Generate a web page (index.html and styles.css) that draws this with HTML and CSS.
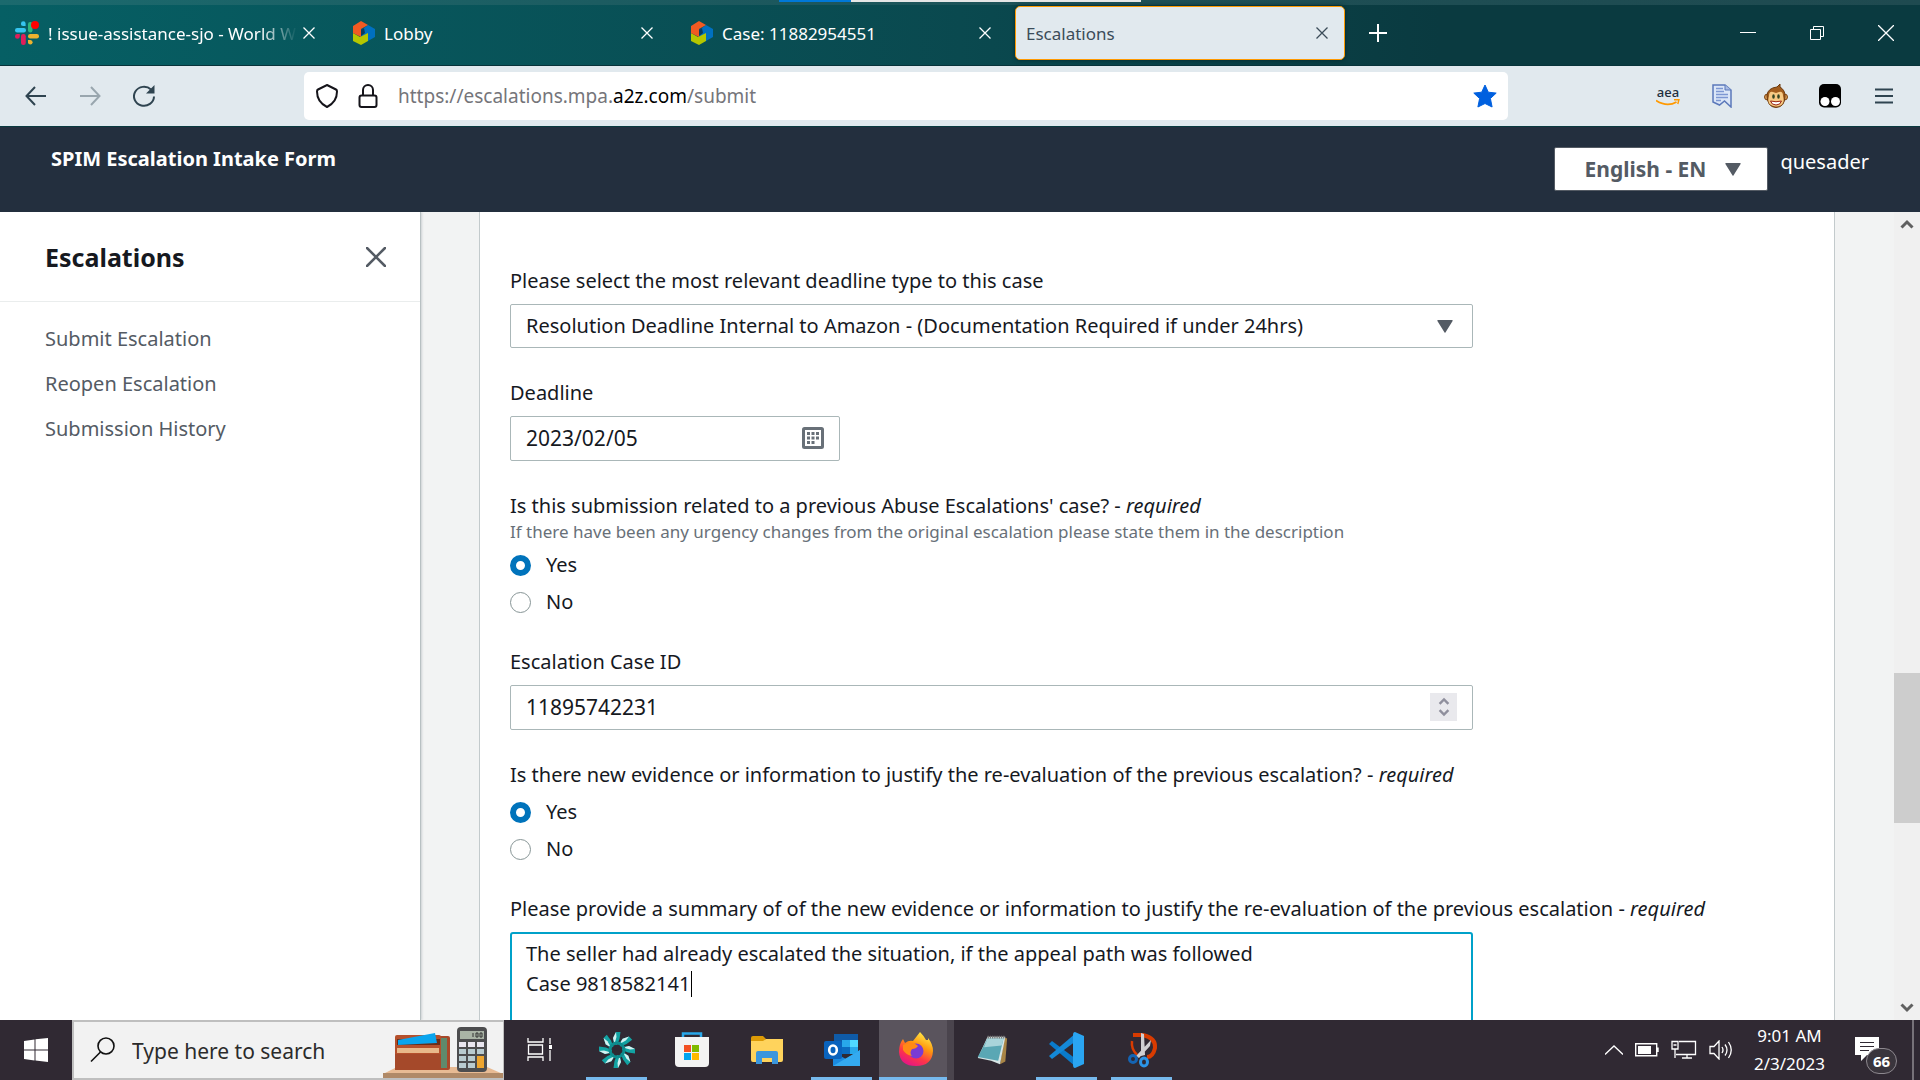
FILE: index.html
```
<!DOCTYPE html>
<html lang="en">
<head>
    <meta charset="UTF-8">
    <meta name="viewport" content="width=device-width, initial-scale=1.0">
    <title>Escalations</title>
    <link rel="stylesheet" href="styles.css">
</head>
<body>
    <!-- shared icons -->
    <svg class="defs" width="0" height="0">
        <symbol id="i-x" viewBox="0 0 12 12"><path d="M.5.5l11 11M11.5.5l-11 11" fill="none" stroke="currentColor" stroke-width="1.3"/></symbol>
        <symbol id="i-hex" viewBox="0 0 22 24">
            <path d="M8 9l7-5 7 4v8l-7 4-7-4z" fill="#0070c0"/>
            <path d="M0 12l7 4 8-4v8l-7 4-8-4z" fill="#b5c700"/>
            <path d="M0 5L8 0l7 4-7 4v8L0 12z" fill="#f15a22"/>
            <path d="M8 9l3-2 1 5-4 3z" fill="#0b3c5e"/>
        </symbol>
        <symbol id="i-up" viewBox="0 0 14 10"><path d="M1.500 8.500L7 3l5.500 5.500" fill="none" stroke="currentColor" stroke-width="3"/></symbol>
        <symbol id="i-down" viewBox="0 0 14 10"><path d="M1.500 1.500L7 7l5.500-5.500" fill="none" stroke="currentColor" stroke-width="3"/></symbol>
        <symbol id="i-tri" viewBox="0 0 16 13"><path d="M1 0h14q1 0 .6 1L8.600 12.200q-.6 1-1.200 0L.4 1Q0 0 1 0z" fill="currentColor"/></symbol>
    </svg>

    <div class="frame">
        <div class="strip"><span class="strip-blue"></span><span class="strip-white"></span></div>
    </div>

    <header class="tabs">
        <div class="tab">
            <svg width="24" height="24" viewBox="0 0 24 24">
                <g fill="#36c5f0"><rect y="7" width="11" height="4.500" rx="2.200"/><path d="M6 2.500a2.300 2.300 0 0 1 4.600 0V5H8.300A2.300 2.300 0 0 1 6 2.500z"/></g>
                <rect x="13" y="1" width="4.500" height="10.500" rx="2.200" fill="#2eb67d"/>
                <g fill="#ecb22e"><rect x="13" y="13" width="11" height="4.500" rx="2.200"/><path d="M13 19h2.500a2.300 2.300 0 1 1-2.500 2.500z"/></g>
                <g fill="#e01e5a"><rect x="6" y="13" width="4.800" height="11" rx="2.200"/><path d="M4.800 13v2.300A2.400 2.400 0 1 1 2.500 13z"/></g>
                <circle cx="20" cy="4" r="4" fill="red"/>
            </svg>
            <span class="tab-title tab-fade">! issue-assistance-sjo - World W</span>
            <button class="tab-close" type="button" aria-label="Close tab"><svg width="12" height="12"><use href="#i-x"/></svg></button>
        </div>
        <div class="tab">
            <svg width="22" height="24"><use href="#i-hex"/></svg>
            <span class="tab-title">Lobby</span>
            <button class="tab-close" type="button" aria-label="Close tab"><svg width="12" height="12"><use href="#i-x"/></svg></button>
        </div>
        <div class="tab">
            <svg width="22" height="24"><use href="#i-hex"/></svg>
            <span class="tab-title">Case: 11882954551</span>
            <button class="tab-close" type="button" aria-label="Close tab"><svg width="12" height="12"><use href="#i-x"/></svg></button>
        </div>
        <div class="tab active">
            <span class="tab-title">Escalations</span>
            <button class="tab-close" type="button" aria-label="Close tab"><svg width="12" height="12"><use href="#i-x"/></svg></button>
        </div>
        <button class="new-tab" type="button" aria-label="New tab"><svg width="18" height="18" viewBox="0 0 18 18"><path d="M9 0v18M0 9h18" stroke="#fff" stroke-width="2"/></svg></button>
        <div class="window-buttons">
            <button type="button" aria-label="Minimize"><svg width="16" height="16" viewBox="0 0 16 16"><path d="M0 7.500h16" stroke="#fff"/></svg></button>
            <button type="button" aria-label="Restore"><svg width="16" height="16" viewBox="0 0 16 16"><path d="M1.500 4.500h10v10h-10zM4.500 4.500v-3h10v10h-3" fill="none" stroke="#fff"/></svg></button>
            <button type="button" aria-label="Close"><svg width="16" height="16" viewBox="0 0 16 16"><path d="M0 0l16 16M16 0L0 16" stroke="#fff" stroke-width="1.300"/></svg></button>
        </div>
    </header>

    <nav class="toolbar">
        <div class="nav-buttons">
            <button type="button" aria-label="Back"><svg width="22" height="20" viewBox="0 0 22 20"><path d="M21 10H1.500M10 1L1.500 10l8.500 9" fill="none" stroke="currentColor" stroke-width="2"/></svg></button>
            <button class="dim" type="button" aria-label="Forward"><svg width="22" height="20" viewBox="0 0 22 20"><path d="M1 10h19.500M12 1l8.500 9-8.500 9" fill="none" stroke="currentColor" stroke-width="2"/></svg></button>
            <button type="button" aria-label="Reload"><svg width="22" height="22" viewBox="0 0 22 22"><path d="M21 11.500A10 9.500 0 1 1 18 4.500" fill="none" stroke="currentColor" stroke-width="2"/><path d="M21.500 0v8.500H13z" fill="currentColor"/></svg></button>
        </div>
        <div class="urlbar">
            <svg width="22" height="24" viewBox="0 0 22 24"><path d="M11 1l9 4.500c1 .5 1 1 1 2 0 7-4 12.500-10 15.500C5 20 1 14.500 1 7.500c0-1 0-1.500 1-2z" fill="none" stroke="#15141a" stroke-width="2"/></svg>
            <svg width="20" height="24" viewBox="0 0 20 24"><rect x="1.500" y="11.500" width="17" height="11.500" rx="2" fill="none" stroke="#15141a" stroke-width="2"/><path d="M5 11V6a5 5 0 0 1 10 0v5" fill="none" stroke="#15141a" stroke-width="2"/></svg>
            <div class="url">https://escalations.mpa.<b>a2z.com</b>/submit</div>
            <svg width="24" height="26" viewBox="0 0 24 24"><path d="M12 1l3.300 7.200 7.900.9-5.800 5.400 1.700 8.500L12 19.500 4.900 23l1.700-8.500L.8 9.100l7.900-.9z" fill="#0060df" stroke="#0060df" stroke-linejoin="round"/></svg>
        </div>
        <div class="extensions">
            <div class="aea">aea<svg width="24" height="7" viewBox="0 0 24 7"><path d="M0 1.500q11 7 20.500 1.500" fill="none" stroke="#f90" stroke-width="1.800"/><path d="M18 .8l5-.3-1.200 4.500" fill="none" stroke="#f90" stroke-width="1.400"/></svg></div>
            <svg width="24" height="24" viewBox="-2 0 24 24"><path d="M1 1h12l6 5v17l-6.500-6-5 4L1 18z" fill="#dbe6f7" stroke="#5b78ba" stroke-width="1.500"/><path d="M13 1v5h6" fill="#a9bce4" stroke="#5b78ba"/><path d="M4 4.500h7M4 7.500h8M4 10.500h12M4 13.500h12M4 16.500h5" stroke="#7d97d2" stroke-width="1.500"/></svg>
            <svg width="24" height="24" viewBox="0 0 24 24"><circle cx="3.500" cy="13" r="3" fill="#d99b55" stroke="#7a4312"/><circle cx="20.500" cy="13" r="3" fill="#d99b55" stroke="#7a4312"/><path d="M3 11Q4 4 13 3l3-3 0 3q5 3 5 9 0 11-9 11.500Q3 23 3 11z" fill="#a25d1d" stroke="#6c3a0e"/><path d="M5 12q0-5 4-4l3 1 3-1q4-1 4 4 3 10-7 10.500Q2 22 5 12z" fill="#f6ca84"/><ellipse cx="9.500" cy="12.500" rx="1.300" ry="2.300" fill="#342"/><ellipse cx="14.500" cy="12.500" rx="1.300" ry="2.300" fill="#342"/><path d="M6.500 17q5.500 1.500 11 0-1 4-5.500 4t-5.500-4z" fill="#fff" stroke="#9a2412"/></svg>
            <svg width="24" height="24" viewBox="0 0 24 24"><rect x="1" y="0" width="22" height="23.500" rx="5"/><circle cx="7" cy="17.500" r="4.500" fill="#fff"/><circle cx="17.500" cy="17.500" r="4.500" fill="#fff"/></svg>
            <button type="button" aria-label="Menu"><svg width="18" height="16" viewBox="0 0 18 16"><path d="M0 1.500h18M0 8h18M0 14.500h18" stroke="#2f4450" stroke-width="2"/></svg></button>
        </div>
    </nav>

    <div class="app-header">
        <h1>SPIM Escalation Intake Form</h1>
        <button class="language" type="button">English - EN <svg width="16" height="13"><use href="#i-tri"/></svg></button>
        <span class="user">quesader</span>
    </div>

    <div class="content">
        <aside class="sidebar">
            <div class="sidebar-head">
                <h2>Escalations</h2>
                <button type="button" aria-label="Close navigation"><svg width="20" height="20" viewBox="0 0 20 20"><path d="M1 1l18 18M19 1L1 19" stroke="#545b64" stroke-width="2.500" stroke-linecap="round"/></svg></button>
            </div>
            <ul class="links">
                <li><a href="#">Submit Escalation</a></li>
                <li><a href="#">Reopen Escalation</a></li>
                <li><a href="#">Submission History</a></li>
            </ul>
        </aside>

        <main class="page">
            <form class="panel">
                <div class="field">
                    <label for="type">Please select the most relevant deadline type to this case</label>
                    <div class="control">
                        <select id="type">
                            <option>Resolution Deadline Internal to Amazon - (Documentation Required if under 24hrs)</option>
                        </select>
                        <svg class="select-arrow" width="16" height="13"><use href="#i-tri"/></svg>
                    </div>
                </div>

                <div class="field">
                    <label for="deadline">Deadline</label>
                    <div class="control short">
                        <input id="deadline" type="text" value="2023/02/05">
                        <svg class="calendar" width="22" height="22" viewBox="0 0 22 22"><rect x="1.500" y="1.500" width="19" height="19" rx="1" fill="#fff" stroke="#687078" stroke-width="3"/><path d="M5 6.500h12M5 11h12M5 15.500h8" stroke="#687078" stroke-width="3" stroke-dasharray="3 1.500"/></svg>
                    </div>
                </div>

                <fieldset class="field">
                    <legend>Is this submission related to a previous Abuse Escalations' case? - <i>required</i></legend>
                    <p class="hint">If there have been any urgency changes from the original escalation please state them in the description</p>
                    <div class="options">
                        <label><input type="radio" name="related" checked> Yes</label>
                        <label><input type="radio" name="related"> No</label>
                    </div>
                </fieldset>

                <div class="field">
                    <label for="caseid">Escalation Case ID</label>
                    <div class="control">
                        <input id="caseid" type="number" value="11895742231">
                        <span class="spinner">
                            <svg width="12" height="8"><use href="#i-up"/></svg>
                            <svg width="12" height="8"><use href="#i-down"/></svg>
                        </span>
                    </div>
                </div>

                <fieldset class="field">
                    <legend>Is there new evidence or information to justify the re-evaluation of the previous escalation? - <i>required</i></legend>
                    <div class="options">
                        <label><input type="radio" name="evidence" checked> Yes</label>
                        <label><input type="radio" name="evidence"> No</label>
                    </div>
                </fieldset>

                <div class="field">
                    <label for="summary">Please provide a summary of of the new evidence or information to justify the re-evaluation of the previous escalation - <i>required</i></label>
                    <div class="control">
                        <textarea id="summary" rows="5">The seller had already escalated the situation, if the appeal path was followed
Case 9818582141</textarea>
                        <span class="caret"></span>
                    </div>
                </div>
            </form>
        </main>

        <div class="scrollbar">
            <svg width="14" height="10"><use href="#i-up"/></svg>
            <div class="track"><div class="thumb"></div></div>
            <svg width="14" height="10"><use href="#i-down"/></svg>
        </div>
    </div>

    <footer class="taskbar">
        <button class="start" type="button" aria-label="Start"><svg width="24" height="24" viewBox="0 0 24 24"><path d="M0 3l10.500-1.500v10H0zM11.500 1.300L24 0v11.500H11.500zM0 12.500h10.500v10L0 21zM11.500 12.500H24V24l-12.500-1.500z" fill="#fff"/></svg></button>
        <div class="search">
            <svg width="26" height="26" viewBox="0 0 26 26"><circle cx="16" cy="9" r="8" fill="none" stroke="#111" stroke-width="1.600"/><path d="M10.500 15L1 24.500" stroke="#111" stroke-width="1.600"/></svg>
            <input type="text" placeholder="Type here to search" aria-label="Search">
            <svg width="120" height="56" viewBox="0 0 120 56">
                <path d="M0 52l14-7h90l16 7z" fill="#e8bb94"/><path d="M0 51h120v5H0z" fill="#b08a68"/>
                <rect x="40" y="14" width="27" height="34" rx="2" fill="#a8492a"/><rect x="58" y="16" width="6" height="30" fill="#5f8a6c"/>
                <rect x="12" y="13" width="46" height="35" rx="2" fill="#b5502c"/><path d="M14 17h43v6H14z" fill="#6b2d18"/><path d="M15 18l37-7 2 10-39 2z" fill="#0aa5ee"/><path d="M14 26h42v5H14z" fill="#e8b98a"/><path d="M12 32h46v16H12z" fill="#a5492a"/>
                <rect x="74" y="5" width="30" height="45" rx="4" fill="#4d4d4f"/><rect x="77" y="9" width="24" height="8" fill="#a9b3a5"/>
                <path d="M90 11v4M93 11h2v4h-2zM97 11h2v4h-2z" fill="none" stroke="#333"/>
                <path d="M76 22.500h25" stroke="#e9e6ef" stroke-width="5" stroke-dasharray="7 2"/><path d="M76 29.500h25M76 36.500h16M76 43.500h16" stroke="#b9cbd0" stroke-width="5" stroke-dasharray="7 2"/><rect x="94" y="34" width="7" height="12" fill="#eea52f"/>
            </svg>
        </div>
        <div class="apps">
            <button type="button" aria-label="Task view"><svg width="26" height="26" viewBox="0 0 26 26"><path d="M2 1v4h15V1M2 24v-4h15v4M2.500 8h14v9h-14zM24 1v6M24 13v11" fill="none" stroke="#fff" stroke-width="1.300"/><path d="M23 8h3v4h-3z" fill="#fff"/></svg></button>
            <button class="open" type="button" aria-label="Chime"><svg width="36" height="36" viewBox="-18 -18 36 36">
                <g id="petal"><path d="M-3-6l-1-6 3-6h4.500l-1 7-2.500 6z" fill="#12a3a3"/><path d="M-4-12l3-6 .5 5-2 7z" fill="#d4f1f1"/></g>
                <use href="#petal" transform="rotate(45)"/><use href="#petal" transform="rotate(90)"/><use href="#petal" transform="rotate(135)"/><use href="#petal" transform="rotate(180)"/><use href="#petal" transform="rotate(225)"/><use href="#petal" transform="rotate(270)"/><use href="#petal" transform="rotate(315)"/>
                <circle r="7" fill="none" stroke="#0d8c8e" stroke-width="3"/>
            </svg></button>
            <button type="button" aria-label="Store"><svg width="36" height="36" viewBox="0 0 36 36"><path d="M9 6V1.500h18V6" fill="none" stroke="#29a8ea" stroke-width="2.500"/><path d="M1 5h34v26q0 4-4 4H5q-4 0-4-4z" fill="#f3f3f3"/><path d="M10 13h7v7h-7z" fill="#f25022"/><path d="M18 13h7v7h-7z" fill="#7fba00"/><path d="M10 21h7v7h-7z" fill="#00a4ef"/><path d="M18 21h7v7h-7z" fill="#ffb900"/></svg></button>
            <button type="button" aria-label="File Explorer"><svg width="32" height="28" viewBox="0 0 32 28"><path d="M0 2q0-2 2-2h10l3 3-3 4H0z" fill="#dc9a06"/><path d="M0 5h12l3-2h17v21q0 2-2 2H2q-2 0-2-2z" fill="#ffd35c"/><path d="M5 28V17q0-2 2-2h18q2 0 2 2v11h-6v-6H11v6z" fill="#3b96dc"/></svg></button>
            <button class="open" type="button" aria-label="Outlook"><svg width="36" height="34" viewBox="0 0 36 34"><path d="M10 1h24v20H10z" fill="#0f5ba8"/><path d="M18 7h8v7h-8z" fill="#28a8ea"/><path d="M26 7h8v7h-8z" fill="#50d9ff"/><path d="M18 14h8v7h-8z" fill="#0b6cc0"/><path d="M26 14h8v7h-8z" fill="#28a8ea"/><path d="M9 19l13 7 14-9v16H9z" fill="#1a8ae0"/><path d="M9 33l27-16v16z" fill="#34aaf0"/><rect y="8" width="18" height="18" rx="2" fill="#0a63bd"/><ellipse cx="9" cy="17" rx="3.800" ry="4.500" fill="none" stroke="#fff" stroke-width="2.600"/></svg></button>
            <button class="open current" type="button" aria-label="Firefox"><svg width="36" height="36" viewBox="0 0 36 36">
                <linearGradient id="ff" x1=".8" y1="0" x2=".3" y2="1"><stop offset="0" stop-color="#fff44f"/><stop offset=".4" stop-color="#ff980e"/><stop offset=".7" stop-color="#ff3647"/><stop offset="1" stop-color="#e31587"/></linearGradient>
                <path d="M1 20Q1 12 5 7l2 4q4-3 8-2 4-5 7-9 4 4 6 8l2 0 0-2q5 6 5 13-1 15-17 15T1 20z" fill="url(#ff)"/>
                <circle cx="18" cy="19" r="7.500" fill="#7a3bd4"/><path d="M5 13q6-3 11-2l4 3q-2 3-6 3-3 4 0 7-6-1-9-6z" fill="#ff8a16"/>
            </svg></button>
            <button type="button" aria-label="Notepad"><svg width="32" height="32" viewBox="0 0 36 34"><path d="M32 3l3 1-2 26-6 3z" fill="#a98546"/><path d="M13 2h20l-6 31-10-4-15-3z" fill="#d7e6e6"/><path d="M13 4h18l-6 25L2 25z" fill="#5aa7b4"/><path d="M13 4h18l-2 8-20 2z" fill="#a9d4da"/><path d="M13 2.500h20" stroke="#777" stroke-width="3" stroke-dasharray="1.500 1"/></svg></button>
            <button class="open" type="button" aria-label="Visual Studio Code"><svg width="36" height="36" viewBox="0 0 36 36"><path d="M0 12l3-3 24 18v8z" fill="#0a7bcb"/><path d="M0 24l3 3L27 9V1z" fill="#1489d8"/><path d="M26 0l9 4v28l-9 4q-2 0-2-3V3q0-3 2-3z" fill="#2aa5f2"/></svg></button>
            <button class="open" type="button" aria-label="Snipping Tool"><svg width="36" height="36" viewBox="0 0 36 36"><path d="M9 3h10q13 3 12 13-2 9-8 9" fill="none" stroke="#d83b01" stroke-width="4"/><path d="M8 9q-1 8 5 14" fill="none" stroke="#d83b01" stroke-width="2.500"/><path d="M17 1l3 1 1 21-4 1zM27 8l-1 6-11 12-3-2z" fill="#cfcfd2"/><ellipse cx="9" cy="27" rx="3.500" ry="3.500" fill="none" stroke="#1464b4" stroke-width="3"/><ellipse cx="20" cy="30" rx="3.500" ry="4" fill="none" stroke="#2b95e8" stroke-width="3"/></svg></button>
        </div>
        <div class="tray">
            <svg width="18" height="10" viewBox="0 0 18 10"><path d="M0 9.500L9 1l9 8.500" fill="none" stroke="#fff" stroke-width="1.300"/></svg>
            <svg width="24" height="14" viewBox="0 0 24 14"><path d="M.7.7h21v12H.7zM23 4.500v4.500" fill="none" stroke="#fff" stroke-width="1.400"/><path d="M3 3h13v8H3z" fill="#fff"/></svg>
            <svg width="26" height="20" viewBox="0 0 26 20"><path d="M8 1.500h16.500v13H5M4 9v9M1 1.500h6V9H1zM2.500 5h3M16 15v3M11 18h10" fill="none" stroke="#fff" stroke-width="1.300"/></svg>
            <svg width="24" height="20" viewBox="0 0 24 20"><path d="M1 6.500h4l5-5.500v18l-5-5.500H1zM13 7q2 3 0 6M16 4.500q4 5.500 0 11M19.500 2q5.500 8 0 16" fill="none" stroke="#fff" stroke-width="1.300"/></svg>
            <div class="clock"><span>9:01 AM</span><span>2/3/2023</span></div>
            <button class="notifications" type="button" aria-label="Notifications">
                <svg width="24" height="24" viewBox="0 0 24 24"><path d="M0 0h24v18H12l-6 6v-6H0z" fill="#fff"/><path d="M5 5.500h14M5 9.500h14M5 13.500h9" stroke="#302933" stroke-width="1.200"/></svg>
                <span class="badge">66</span>
            </button>
        </div>
    </footer>
</body>
</html>
```
FILE: styles.css
```
*{
    box-sizing: border-box;
}

body{
    margin: 0;
    height: 100vh;
    display: flex;
    flex-direction: column;
    overflow: hidden;
    font-family: "Noto Sans", sans-serif;
    font-size: 20px;
    color: #16191f;
    background-color: #fff;
}

button{
    border: 0;
    padding: 0;
    background: none;
    color: inherit;
    font-family: inherit;
    display: flex;
    justify-content: center;
    align-items: center;
}

svg{
    flex-shrink: 0;
}

.defs{
    position: absolute;
}

/* browser window */
.frame{
    height: 5px;
    background: linear-gradient(90deg, #1b6a6e, #1d4f55 60%, #1f4a50);
}

.strip{
    display: flex;
    justify-content: center;
    height: 2px;
}

.strip-blue{
    width: 72px;
    background-color: #0078d7;
}

.strip-white{
    width: 290px;
    background-color: #e6e6e6;
}

.tabs{
    height: 61px;
    display: flex;
    align-items: center;
    padding: 0 0 4px 1px;
    background: linear-gradient(90deg, #065f64, #0a494f 50%, #0a3a40 75%);
    border-bottom: 1px solid #08333a;
    color: #fff;
    font-size: 17px;
}

.tab{
    width: 330px;
    height: 54px;
    margin-right: 8px;
    padding: 0 6px 0 14px;
    display: flex;
    align-items: center;
    gap: 9px;
    border-radius: 5px;
}

.tab-title{
    flex: 1;
    white-space: nowrap;
}

.tab-fade{
    -webkit-mask-image: linear-gradient(90deg, #000 85%, transparent);
    mask-image: linear-gradient(90deg, #000 85%, transparent);
}

.tab-close{
    width: 24px;
    height: 24px;
    margin-left: -9px;
    margin-right: 4px;
}

.active{
    background-color: #e1e9ee;
    color: #3b4c59;
    border: 1px solid #f90;
    padding-left: 10px;
    box-shadow: 0 0 4px #04282c;
}

.new-tab{
    width: 50px;
    height: 50px;
}

.window-buttons{
    margin-left: auto;
    display: flex;
}

.window-buttons button{
    width: 69px;
    height: 50px;
}

.toolbar{
    height: 61px;
    display: flex;
    align-items: center;
    background-color: #e1e9ee;
    border-bottom: 1px solid #0a3a40;
    color: #2f4450;
}

.nav-buttons{
    width: 304px;
    padding-left: 9px;
    display: flex;
}

.nav-buttons button{
    width: 54px;
    height: 48px;
}

.dim{
    opacity: .4;
}

.urlbar{
    flex: 1;
    height: 48px;
    padding: 0 11px 0 12px;
    display: flex;
    align-items: center;
    gap: 20px;
    background-color: #fff;
    border-radius: 5px;
}

.url{
    flex: 1;
    font-size: 19px;
    color: #75757a;
}

.url b{
    font-weight: 400;
    color: #000;
}

.extensions{
    width: 412px;
    padding-right: 9px;
    display: flex;
    justify-content: flex-end;
    align-items: center;
}

.extensions > *{
    margin: 0 15px;
}

.extensions button{
    width: 24px;
}

.aea{
    width: 24px;
    display: flex;
    flex-direction: column;
    align-items: center;
    font-size: 13px;
    font-weight: 500;
    line-height: 13px;
    color: #232f3e;
}

/* application */
.app-header{
    height: 85px;
    padding: 0 51px;
    display: flex;
    align-items: flex-start;
    background-color: #232f3e;
    color: #fff;
    line-height: 30px;
}

.app-header h1{
    margin: 17px auto 0 0;
    font-size: 20px;
}

.language{
    height: 44px;
    margin-top: 20px;
    padding: 0 26px 0 30px;
    gap: 19px;
    border: 1px solid #545b64;
    border-radius: 2px;
    background-color: #fff;
    color: #545b64;
    font-size: 21px;
    font-weight: 700;
}

.user{
    margin: 20px 0 0 12px;
}

.content{
    flex: 1;
    min-height: 0;
    display: flex;
    overflow: hidden;
    background-color: #f2f3f3;
}

.sidebar{
    width: 421px;
    background-color: #fff;
    border-right: 1px solid #b8c0c2;
    box-shadow: 1px 0 2px #ccd1d3;
}

.sidebar-head{
    height: 90px;
    padding: 0 34px 0 45px;
    display: flex;
    justify-content: space-between;
    align-items: center;
    border-bottom: 1px solid #eaeded;
}

.sidebar h2{
    margin: 0;
    font-size: 25px;
    line-height: 30px;
}

.links{
    list-style: none;
    margin: 0;
    padding: 22px 45px;
    display: flex;
    flex-direction: column;
    gap: 15px;
    line-height: 30px;
}

.links a{
    color: #545b64;
    text-decoration: none;
}

.page{
    flex: 1;
    padding: 0 59px 0 58px;
    line-height: 30px;
}

.panel{
    height: 100%;
    padding: 54px 30px 0;
    display: flex;
    flex-direction: column;
    gap: 30px;
    background-color: #fff;
    border: 1px solid #c3cacc;
    border-width: 0 1px;
}

.field{
    border: 0;
    margin: 0;
    padding: 0;
    white-space: nowrap;
}

.field > label{
    display: block;
    margin-bottom: 8px;
}

legend{
    padding: 0;
}

.hint{
    margin: 0;
    font-size: 17px;
    line-height: 22px;
    color: #687078;
}

.options{
    margin-top: 7px;
    display: flex;
    flex-direction: column;
    gap: 7px;
}

.options label{
    display: flex;
    align-items: center;
    gap: 15px;
}

.options input{
    appearance: none;
    width: 21px;
    height: 21px;
    margin: 0;
    border: 1px solid #879596;
    border-radius: 50%;
    background-color: #fff;
}

.options input:checked{
    border: 6px solid #0073bb;
}

.control{
    position: relative;
    max-width: 963px;
    display: flex;
}

.short{
    max-width: 330px;
}

.control input,
.control select,
.control textarea{
    appearance: none;
    width: 100%;
    height: 45px;
    padding: 0 15px 2px;
    border: 1px solid #aab7b8;
    border-radius: 2px;
    background-color: #fff;
    color: #16191f;
    font-family: inherit;
    font-size: 20px;
}

.control select{
    height: 44px;
}

.control input{
    font-size: 21px;
}

.control input::-webkit-inner-spin-button{
    appearance: none;
}

.control textarea{
    height: 170px;
    padding: 5px 14px;
    line-height: 30px;
    border: 2px solid #00a1c9;
    border-radius: 3px;
    outline: 0;
    resize: none;
}

.select-arrow{
    position: absolute;
    top: 16px;
    right: 20px;
    color: #545b64;
}

.calendar{
    position: absolute;
    top: 11px;
    right: 16px;
}

.spinner{
    position: absolute;
    top: 8px;
    right: 16px;
    width: 27px;
    height: 28px;
    display: flex;
    flex-direction: column;
    justify-content: center;
    align-items: center;
    gap: 4px;
    background-color: #e9e9ed;
    color: #8f8f9d;
}

.caret{
    position: absolute;
    top: 39px;
    left: 181px;
    width: 1px;
    height: 26px;
    background-color: #000;
}

.scrollbar{
    width: 26px;
    padding: 7px 0;
    display: flex;
    flex-direction: column;
    align-items: center;
    background-color: #f0f0f0;
    color: #606060;
}

.track{
    flex: 1;
    width: 100%;
    display: flex;
    flex-direction: column;
    justify-content: flex-end;
    padding-bottom: 180px;
}

.thumb{
    height: 150px;
    background-color: #cdcdcd;
}

/* taskbar */
.taskbar{
    height: 60px;
    display: flex;
    background-color: #302933;
    color: #fff;
}

.start{
    width: 72px;
}

.search{
    width: 432px;
    padding-left: 16px;
    display: flex;
    align-items: center;
    background-color: #f2f2f2;
    border: 2px solid #bfbfbf;
    border-right-width: 1px;
}

.search input{
    flex: 1;
    min-width: 0;
    margin-left: 16px;
    padding: 2px 0 0;
    border: 0;
    background: none;
    font-family: inherit;
    font-size: 21px;
}

.search input::placeholder{
    color: #2b2b2b;
}

.apps{
    display: flex;
}

.apps button{
    width: 75px;
    background-repeat: no-repeat;
    background-position: center bottom;
    background-size: 61px 3px;
}

.apps button:first-child{
    padding-right: 5px;
}

.apps .open{
    background-image: linear-gradient(#76b9ed, #76b9ed);
}

.apps .current{
    background-color: #5a545d;
    background-size: 100% 3px;
    border-right: 7px solid #4a444d;
    padding-left: 5px;
}

.tray{
    margin-left: auto;
    padding-right: 6px;
    display: flex;
    align-items: center;
    gap: 12px;
}

.clock{
    margin: 0 17px 0 9px;
    display: flex;
    flex-direction: column;
    align-items: center;
    font-size: 17px;
    line-height: 28px;
}

.notifications{
    position: relative;
    width: 60px;
    height: 60px;
    padding: 0 32px 2px 0;
    border-right: 2px solid #777279;
}

.badge{
    position: absolute;
    top: 28px;
    left: 12px;
    width: 31px;
    height: 26px;
    border: 1px solid #8d888f;
    border-radius: 13px;
    background-color: #3a353d;
    font-size: 15px;
    font-weight: 700;
    line-height: 24px;
}
```
